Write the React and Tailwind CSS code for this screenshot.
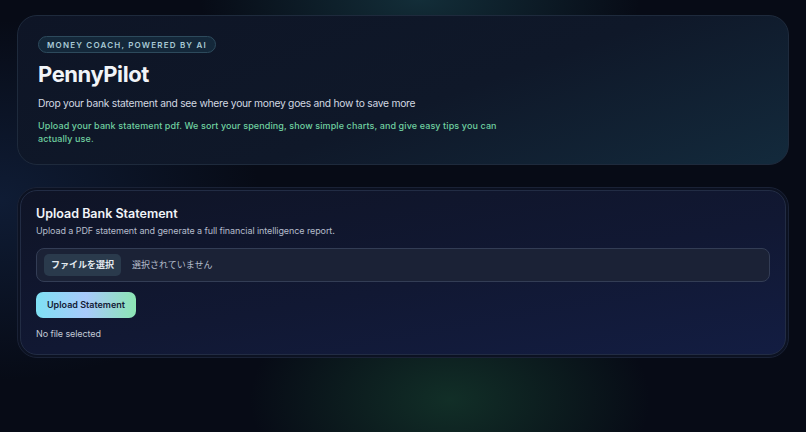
export default function App() {
  return (
    <div
      className="relative min-h-[432px] w-full overflow-hidden bg-[#070b16] px-[17px] pt-[15px] pb-[20px]"
      style={{ fontFamily: "Inter, 'Noto Sans CJK JP', sans-serif" }}
    >
      <div className="pointer-events-none absolute inset-0 bg-[radial-gradient(ellipse_220px_90px_at_420px_0px,rgba(40,110,120,0.35),transparent)]" />
      <div className="pointer-events-none absolute inset-0 bg-[radial-gradient(ellipse_200px_120px_at_450px_400px,rgba(30,90,60,0.45),transparent)]" />
      <div className="pointer-events-none absolute inset-0 bg-[radial-gradient(ellipse_260px_180px_at_0px_200px,rgba(30,60,110,0.35),transparent)]" />

      <div className="relative flex flex-col gap-[22px]">
        <section className="rounded-[20px] border border-[#1e2a3c] bg-[linear-gradient(160deg,#0e1526_0%,#0f1829_55%,#132a3c_100%)] px-[20px] pt-[20px] pb-[19px]">
          <div className="flex h-[17px] w-fit items-center rounded-full border border-[#2d4a5c] bg-[#14283a] px-[8px] text-[8px] font-semibold uppercase leading-none tracking-[0.15em] text-[#a9cbd6]">
            Money Coach, powered by AI
          </div>
          <h1 className="mt-[7px] text-[22px] font-bold leading-[28px] tracking-[-0.02em] text-[#f1f4f8]">
            PennyPilot
          </h1>
          <p className="mt-[7px] text-[10.25px] leading-[16px] tracking-[-0.025em] text-[#d3d9e2]">
            Drop your bank statement and see where your money goes and how to save more
          </p>
          <p className="mt-[8px] w-[490px] text-[9px] font-medium leading-[13px] tracking-[0.012em] text-[#6fd0a0]">
            Upload your bank statement pdf. We sort your spending, show simple charts, and give easy tips you can actually use.
          </p>
        </section>

        <section className="rounded-[20px] border border-[#1a2236] bg-[#0c1222] p-[2px]">
          <div className="rounded-[17px] border border-[#222c44] bg-[linear-gradient(170deg,#0f1426_0%,#111833_55%,#131d42_100%)] px-[15px] pt-[14px] pb-[13px]">
            <h2 className="text-[12.5px] font-semibold leading-[18px] text-[#f1f4f8]">
              Upload Bank Statement
            </h2>
            <p className="mt-[1px] text-[9px] leading-[14px] tracking-[-0.01em] text-[#b4bccb]">
              Upload a PDF statement and generate a full financial intelligence report.
            </p>
            <div className="mt-[10px] flex h-[34px] items-center rounded-[8px] border border-[#333d55] bg-[#1b2236] px-[7px]">
              <span className="flex h-[22px] items-center rounded-[5px] bg-[#2a3a4c] px-[7px] text-[9px] font-semibold text-[#e3e9ef]">
                ファイルを選択
              </span>
              <span className="ml-[11px] text-[9px] text-[#b4bccb]">選択されていません</span>
            </div>
            <button className="mt-[10px] flex h-[26px] items-center rounded-[7px] bg-[linear-gradient(90deg,#7fe0f4_0%,#a8c9fb_50%,#8ce6b4_100%)] px-[11px] text-[9px] font-semibold text-[#142036]">
              Upload Statement
            </button>
            <p className="mt-[9px] text-[9px] leading-[14px] tracking-[-0.01em] text-[#c3cad6]">No file selected</p>
          </div>
        </section>
      </div>
    </div>
  );
}
